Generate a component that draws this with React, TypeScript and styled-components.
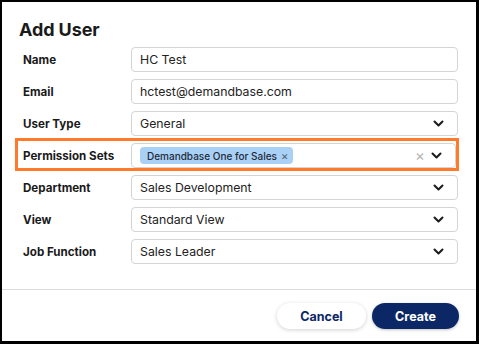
import styled, { createGlobalStyle } from "styled-components";

const GlobalStyle = createGlobalStyle`
  html, body {
    margin: 0;
    padding: 0;
    background: #000;
  }
  * {
    box-sizing: border-box;
  }
`;

const navy = "#0c2766";

interface FieldProps {
  label: string;
  value: string;
  select?: boolean;
}

function Chevron() {
  return (
    <svg width="11" height="7" viewBox="0 0 11 7" fill="none">
      <path d="M1.5 1.5l4 4 4-4" stroke="#1a1a1a" strokeWidth="2" strokeLinecap="round" strokeLinejoin="round" />
    </svg>
  );
}

function Field({ label, value, select }: FieldProps) {
  return (
    <Row>
      <Label>{label}</Label>
      <Input>
        <Value>{value}</Value>
        {select && (
          <Indicators>
            <Chevron />
          </Indicators>
        )}
      </Input>
    </Row>
  );
}

export default function App() {
  return (
    <>
      <GlobalStyle />
      <Frame>
        <Body>
          <Title>Add User</Title>
          <Form>
            <Field label="Name" value="HC Test" />
            <Field label="Email" value="hctest@demandbase.com" />
            <Field label="User Type" value="General" select />
            <Highlight>
              <Row>
                <Label>Permission Sets</Label>
                <Input>
                  <Tag>
                    Demandbase One for Sales
                    <TagRemove>×</TagRemove>
                  </Tag>
                  <Indicators>
                    <Clear>×</Clear>
                    <Chevron />
                  </Indicators>
                </Input>
              </Row>
            </Highlight>
            <Field label="Department" value="Sales Development" select />
            <Field label="View" value="Standard View" select />
            <Field label="Job Function" value="Sales Leader" select />
          </Form>
        </Body>
        <Footer>
          <Button>Cancel</Button>
          <Button primary>Create</Button>
        </Footer>
      </Frame>
    </>
  );
}

const Frame = styled.div`
  width: 479px;
  height: 344px;
  background: #fff;
  border-style: solid;
  border-color: #000;
  border-width: 2px 3px 3px 2px;
  display: flex;
  flex-direction: column;
  font-family: Inter, "Liberation Sans", sans-serif;
  color: #1a1a1a;
`;

const Body = styled.div`
  padding: 18px 18px 25px 17px;
  border-bottom: 1px solid #dcdcdc;
`;

const Title = styled.h1`
  margin: 0 0 7px;
  font-size: 18px;
  line-height: 20px;
  font-weight: 700;
  letter-spacing: -0.1px;
`;

const Form = styled.div`
  display: flex;
  flex-direction: column;
  gap: 7px;
  padding-left: 4px;
`;

const Row = styled.div`
  display: grid;
  grid-template-columns: 108px 1fr;
  align-items: center;
  height: 25px;
`;

const Label = styled.div`
  font-size: 11.6px;
  font-weight: 700;
  color: #1a1a1a;
`;

const Input = styled.div`
  height: 25px;
  border: 1px solid #d4d4d4;
  border-radius: 4px;
  display: flex;
  align-items: center;
  padding: 0 13px 0 8px;
  background: #fff;
`;

const Value = styled.span`
  flex: 1;
  font-size: 12.3px;
  color: #222;
`;

const Indicators = styled.div`
  margin-left: auto;
  display: flex;
  align-items: center;
  gap: 6px;
`;

const Clear = styled.span`
  font-size: 15px;
  line-height: 1;
  color: #b5b5b5;
`;

const Highlight = styled.div`
  margin: -5px -1px -3px -8px;
  padding: 2px 0 0 5px;
  border: 3px solid #ff7a2a;
`;

const Tag = styled.span`
  display: inline-flex;
  align-items: center;
  gap: 4px;
  height: 17px;
  padding: 0 5px 0 7px;
  border-radius: 4px;
  background: #a9d1f6;
  font-size: 10px;
  font-weight: 500;
  color: #1f2a3a;
`;

const TagRemove = styled.span`
  font-size: 11px;
  color: #5a6a7a;
`;

const Footer = styled.div`
  flex: 1;
  display: flex;
  justify-content: flex-end;
  align-items: flex-start;
  gap: 6px;
  padding: 13px 17px 0 0;
`;

const Button = styled.button<{ primary?: boolean }>`
  height: 26px;
  width: ${({ primary }) => (primary ? "87px" : "89px")};
  border: none;
  border-radius: 13px;
  font-family: Inter, "Liberation Sans", sans-serif;
  font-size: 12.5px;
  font-weight: 700;
  cursor: pointer;
  color: ${({ primary }) => (primary ? "#fff" : navy)};
  background: ${({ primary }) => (primary ? navy : "#fff")};
  box-shadow: ${({ primary }) =>
    primary ? "0 1px 3px rgba(0,0,0,0.25)" : "0 1px 4px rgba(0,0,0,0.18)"};
`;
